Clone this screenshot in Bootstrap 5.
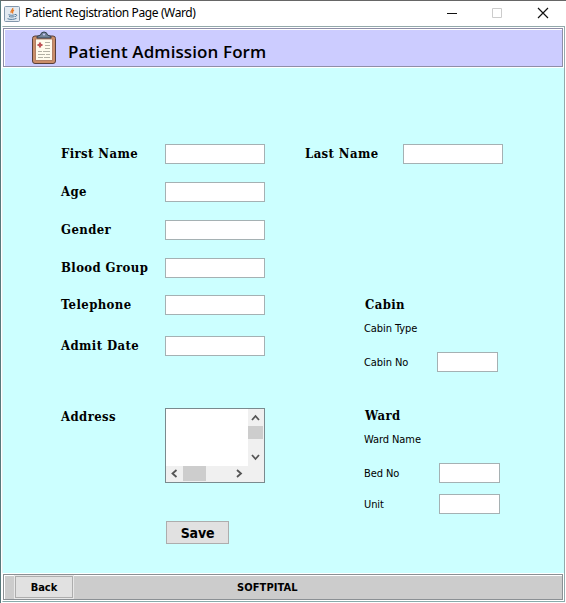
<!DOCTYPE html>
<html lang="en">
<head>
<meta charset="utf-8">
<meta name="viewport" content="width=device-width, initial-scale=1">
<title>Patient Registration Page (Ward)</title>
<link rel="stylesheet" href="https://cdn.jsdelivr.net/npm/bootstrap@5.3.0/dist/css/bootstrap.min.css">
<style>
html,body{height:603px;overflow:hidden}
body{background:#fff;color:#000;font-family:"DejaVu Sans Condensed","DejaVu Sans",sans-serif;font-size:11px;line-height:20px}
.window{width:566px;height:603px;border-top:1px solid #666;border-left:1px solid #56797b}
.titlebar{height:25px;padding-left:3px;font:12px/24px "Noto Sans",sans-serif}
.titlebar .caption{margin:-1px 0 0 5px;letter-spacing:-.38px}
.win-btns{width:106px;margin:-1px 15px 0 0}
.client{margin-left:1px;width:563px;height:576px;border:1px solid #93a9ab;border-left-color:#e6f5f5;background:#cff;border-bottom-color:#8aa}
.etched{border:1px solid #8e8ea8;outline:1px solid #fff;box-shadow:inset 1px 1px #fff}
.banner{height:39px;margin:1px 1px 0 0;background:#ccf;padding-left:27px}
.banner h1{font:600 17px/22px "Open Sans",sans-serif;margin:8px 0 0 11px;letter-spacing:.1px}
.form-area{height:507px;padding:77px 0 0 58px}
.col-left{width:244px}
.frow{height:20px;margin-bottom:18px}
.gap-blood{margin-bottom:17px}
.gap-phone{margin-bottom:21px}
.gap-date{margin-bottom:52px}
.lbl{width:104px;font:bold 13px/19px "DejaVu Serif Condensed","DejaVu Serif",serif;font-stretch:condensed;letter-spacing:.4px;white-space:nowrap}
.lbl-last{width:98px}
.lbl-address{line-height:18px}
.field.form-control{width:100px;height:20px;min-height:0;padding:0 3px;border:1px solid #a5b1b3;border-radius:0;background:#fff;font-size:11px}
.field.short{width:61px}
.small-lbl{width:73px;height:20px;white-space:nowrap;font-stretch:condensed;line-height:21px;letter-spacing:-.08px}
.area{width:100px;height:75px;border:1px solid #7a8a8e;background:#f0f0f0}
.area textarea{display:block;width:82px;height:57px;border:0;border-radius:0;padding:2px;resize:none;background:#fff;outline:0}
.vbar{width:16px;height:57px}.vbar i{display:block;width:15px;height:13px;background:#cdcdcd}
.hbar{width:82px;height:16px}.hbar i{display:block;width:23px;height:15px;background:#cdcdcd}
.java-btn.btn{border:1px solid #adadad;border-radius:0;background:#e1e1e1;color:#000;padding:0;font:bold 14px/20px "DejaVu Sans Condensed","DejaVu Sans",sans-serif;font-stretch:condensed}
.save.btn{width:63px;height:23px;margin:38px 0 0 105px;letter-spacing:-.2px}
.foot{height:26px;margin-right:1px;background:#ccc;padding-left:11px;border-color:#8b9094}
.back.btn{width:58px;height:22px;padding-top:1px;font-size:11px;outline:1px solid #e8e8e8}
.brand{font-weight:bold;font-stretch:condensed;margin-left:164px;padding-top:1px;letter-spacing:.1px;white-space:nowrap}
.places{padding:131px 0 0 59px}
.places .lbl{height:20px;padding-left:1px}
.kind{margin-top:4px;line-height:19px}
.cabin-no{margin-top:13px}
.ward-title{margin-top:34px}
.bed{margin-top:13px}
.unit{margin-top:11px}
.bed .small-lbl,.unit .small-lbl{width:75px}
</style>
</head>
<body>
<div class="window">
  <header class="titlebar d-flex align-items-center">
    <svg width="16" height="16" viewBox="0 0 16 16"><rect x=".5" y=".5" width="15" height="15" rx="1" fill="#e3eaf1" stroke="#8297ac"/><path d="M8.700 2c1 2-3.200 2.700-1.400 5M10 4.200C7.500 5.300 8.700 6 8.700 7.500" fill="none" stroke="#e87b26" stroke-width="1.300"/><path d="M4.500 8.700c2 .8 4.500.7 6.200 0M5 10.500c2 .7 4 .6 5.500 0M3.500 12.700c3 1.200 7 .7 9-.4M11 8.500c2.300-.5 2.200 1.700 0 2.200" fill="none" stroke="#527a9c"/></svg>
    <span class="caption">Patient Registration Page (Ward)</span>
    <svg class="win-btns ms-auto" width="106" height="24" viewBox="0 0 106 24" fill="none"><path d="M2 12.500h10" stroke="#111"/><path d="M47.500 7.500h9v9h-9z" stroke="#ccc"/><path d="M93 7l10 10M103 7l-10 10" stroke="#111" stroke-width="1.200"/></svg>
  </header>
  <main class="client">
    <div class="banner etched d-flex align-items-center">
      <svg width="26" height="34" viewBox="0 0 26 34"><rect x="1.500" y="5" width="23" height="27.500" rx="2.500" fill="#ca8e69" stroke="#573f3c"/><path d="M4.500 8h17v21.500h-17z" fill="#fffbed" stroke="#a56f54" stroke-width=".8"/><path d="M6 7V5.500L9.500 4q.5-3 3.500-3t3.500 3L20 5.500V7z" fill="#75869b" stroke="#354152"/><circle cx="13" cy="3.500" r="1" fill="#ccf"/><path d="M9 11.500v5M6.500 14h5" stroke="#bf5358" stroke-width="2.200"/><path d="M14 11.500h5M14 14.500h5M14 17.500h5M7 20.500h4m1 0h7M7 23.500h7m1 0h4M7 26.500h5m1 0h6" stroke="#aaa79c" stroke-width=".9"/></svg>
      <h1>Patient Admission Form</h1>
    </div>
    <div class="form-area d-flex">
      <section class="col-left">
        <div class="frow d-flex"><label class="lbl" for="first">First Name</label><input class="field form-control" id="first"></div>
        <div class="frow d-flex"><label class="lbl" for="age">Age</label><input class="field form-control" id="age"></div>
        <div class="frow d-flex"><label class="lbl" for="gender">Gender</label><input class="field form-control" id="gender"></div>
        <div class="frow gap-blood d-flex"><label class="lbl" for="blood">Blood Group</label><input class="field form-control" id="blood"></div>
        <div class="frow gap-phone d-flex"><label class="lbl" for="phone">Telephone</label><input class="field form-control" id="phone"></div>
        <div class="frow gap-date d-flex"><label class="lbl" for="date">Admit Date</label><input class="field form-control" id="date"></div>
        <div class="d-flex"><label class="lbl lbl-address" for="address">Address</label>
          <div class="area">
            <div class="d-flex"><textarea id="address"></textarea>
              <div class="vbar d-flex flex-column"><svg width="15" height="17" fill="none" stroke="#555" stroke-width="1.800"><path d="M4 11l3.500-4L11 11"/></svg><i></i><svg width="15" height="27" fill="none" stroke="#555" stroke-width="1.800"><path d="M4 16l3.500 4L11 16"/></svg></div>
            </div>
            <div class="hbar d-flex"><svg width="17" height="15" fill="none" stroke="#555" stroke-width="1.800"><path d="M10.500 4l-4 3.500 4 3.500"/></svg><i></i><svg width="42" height="15" fill="none" stroke="#555" stroke-width="1.800"><path d="M31 4l4 3.500-4 3.500"/></svg></div>
          </div>
        </div>
        <button class="java-btn save btn d-block">Save</button>
      </section>
      <section>
        <div class="frow d-flex mb-0"><label class="lbl lbl-last" for="last">Last Name</label><input class="field form-control" id="last"></div>
        <div class="places">
          <div class="lbl">Cabin</div>
          <div class="small-lbl kind">Cabin Type</div>
          <div class="d-flex cabin-no"><label class="small-lbl" for="cabin">Cabin No</label><input class="field short form-control" id="cabin"></div>
          <div class="lbl ward-title">Ward</div>
          <div class="small-lbl kind">Ward Name</div>
          <div class="d-flex bed"><label class="small-lbl" for="bed">Bed No</label><input class="field short form-control" id="bed"></div>
          <div class="d-flex unit"><label class="small-lbl" for="unit">Unit</label><input class="field short form-control" id="unit"></div>
        </div>
      </section>
    </div>
    <footer class="foot etched d-flex align-items-center">
      <button class="java-btn back btn">Back</button><span class="brand">SOFTPITAL</span>
    </footer>
  </main>
</div>
<script src="https://cdn.jsdelivr.net/npm/bootstrap@5.3.0/dist/js/bootstrap.bundle.min.js"></script>
</body>
</html>
